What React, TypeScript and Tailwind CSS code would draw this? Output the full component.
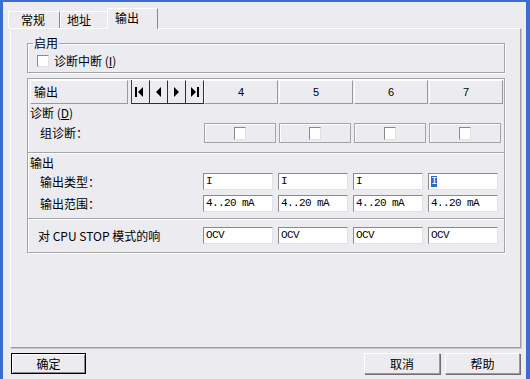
import React from 'react';

const raised = 'border border-t-white border-l-white border-r-[#9a9a9a] border-b-[#9a9a9a]';
const sunken = 'border border-t-[#8a8a8a] border-l-[#8a8a8a] border-r-[#e2e2e2] border-b-[#e2e2e2] bg-white';

const NavGlyph = ({ kind }: { kind: number }) => (
  <svg width="17" height="22" viewBox="0 0 17 22">
    {kind === 0 && (
      <>
        <rect x="3" y="6" width="2" height="10" fill="#000" />
        <polygon points="11,6 11,16 6,11" fill="#000" />
      </>
    )}
    {kind === 1 && <polygon points="11,6 11,16 6,11" fill="#000" />}
    {kind === 2 && <polygon points="6,6 6,16 11,11" fill="#000" />}
    {kind === 3 && (
      <>
        <polygon points="5,6 5,16 10,11" fill="#000" />
        <rect x="11" y="6" width="2" height="10" fill="#000" />
      </>
    )}
  </svg>
);

const Field = ({ value, selected }: { value: string; selected?: boolean }) => (
  <div className={`w-[70px] h-[17px] ${sunken} flex items-center pl-[2px] font-['Liberation_Mono',monospace] text-[11px] tracking-[-0.6px] leading-none`}>
    {selected ? <span className="bg-[#316ac5] text-white">{value}</span> : value}
  </div>
);

const FieldRow = ({ label, value, last, className }: { label: string; value: string; last?: boolean; className: string }) => (
  <div className={`flex items-center h-[17px] ${className}`}>
    <div className="w-[175px] pl-[12px] leading-[17px]">{label}</div>
    {[0, 1, 2, 3].map((i) => (
      <div key={i} className="w-[75px]">
        <Field value={value} selected={last && i === 3} />
      </div>
    ))}
  </div>
);

export default function App() {
  return (
    <div className="w-[530px] h-[379px] bg-[#ecebef] border-t-2 border-l-[3px] border-r-[4px] border-[#3a6dcf] flex flex-col text-[12px] text-black font-['Noto_Sans_CJK_SC','Liberation_Sans',sans-serif]">
      {/* tabs */}
      <div className="flex items-end h-[26px] pl-[5px]">
        <div className="w-[52px] h-[17px] pl-[12px] leading-[15px] border-t border-l border-r border-t-white border-l-white border-r-[#8a8a8a]">常规</div>
        <div className="w-[47px] h-[17px] pl-[6px] leading-[15px] border-t border-l border-t-white border-l-white">地址</div>
        <div className="w-[51px] h-[21px] -mb-px relative z-10 bg-[#ecebef] pl-[7px] leading-[18px] border-t border-l border-r border-t-white border-l-white border-r-[#8a8a8a]">输出</div>
      </div>

      {/* tab panel */}
      <div className="ml-[7px] w-[511px] h-[320px] border border-t-white border-l-white border-r-[#9d9d9d] border-b-[#9d9d9d] shadow-[1px_1px_0_#c9c9c9] pt-[14px] pl-[16px]">
        {/* 启用 group */}
        <div className="relative w-[478px] border border-[#a5a5a5] shadow-[inset_1px_1px_0_#fff,1px_1px_0_#fff] pt-[10px] pb-[4px] pl-[9px]">
          <span className="absolute -top-[8px] left-[5px] px-[1px] bg-[#ecebef] leading-[14px]">启用</span>
          <div className="flex items-center h-[14px] gap-[5px]">
            <div className={`w-[12px] h-[12px] ${sunken}`} />
            <span className="leading-[14px]">
              诊断中断 (<span className="underline">I</span>)
            </span>
          </div>
        </div>

        {/* table */}
        <div className="mt-[5px] w-[478px] border border-[#a5a5a5] shadow-[inset_1px_1px_0_#fff,1px_1px_0_#fff] pb-[8px]">
          <div className="flex mt-[1px] pl-[2px] h-[24px]">
            <div className={`w-[98px] h-[24px] ${raised} pl-[3px] leading-[21px]`}>输出</div>
            <div className="ml-[3px] flex border-l border-[#404040]">
              {[0, 1, 2, 3].map((k) => (
                <div key={k} className="w-[18px] h-[24px] border-t border-t-white border-r border-b border-r-[#303030] border-b-[#303030] flex items-center justify-center">
                  <NavGlyph kind={k} />
                </div>
              ))}
            </div>
            {['4', '5', '6', '7'].map((n) => (
              <div key={n} className={`w-[74px] mr-[1px] h-[24px] ${raised} flex items-center justify-center font-['Liberation_Sans',sans-serif] text-[11px]`}>
                {n}
              </div>
            ))}
          </div>

          <div className="h-[17px] leading-[17px] pl-[2px]">
            诊断 (<span className="underline">D</span>)
          </div>
          <div className="flex items-center h-[20px] mt-[2px]">
            <div className="w-[176px] pl-[12px] leading-[20px]">组诊断：</div>
            {[0, 1, 2, 3].map((i) => (
              <div key={i} className="w-[75px]">
                <div className="w-[72px] h-[20px] border border-[#a5a5a5] shadow-[inset_1px_1px_0_#fff] flex items-center justify-center">
                  <div className={`w-[12px] h-[13px] ${sunken}`} />
                </div>
              </div>
            ))}
          </div>

          <div className="mt-[9px] border-t border-t-[#a5a5a5] border-b border-b-white" />
          <div className="h-[18px] leading-[18px] pl-[2px]">输出</div>
          <FieldRow className="mt-[1px]" label="输出类型：" value="I" last />
          <FieldRow className="mt-[5px]" label="输出范围：" value="4..20 mA" />

          <div className="mt-[6px] border-t border-t-[#a5a5a5] border-b border-b-white" />
          <div className="flex items-center h-[17px] mt-[7px]">
            <div className="w-[175px] pl-[10px] leading-[17px]">对 CPU STOP 模式的响</div>
            {[0, 1, 2, 3].map((i) => (
              <div key={i} className="w-[75px]">
                <Field value="OCV" />
              </div>
            ))}
          </div>
        </div>
      </div>

      {/* buttons */}
      <div className="flex mt-[5px] pl-[8px] pr-[6px]">
        <button className="w-[75px] h-[21px] border border-black shadow-[inset_1px_1px_0_#fff,inset_-1px_-1px_0_#8a8a8a] leading-[19px]">确定</button>
        <button className={`ml-auto w-[76px] h-[21px] ${raised} shadow-[1px_1px_0_#6f6f6f] leading-[19px]`}>取消</button>
        <button className={`ml-[5px] w-[75px] h-[21px] ${raised} shadow-[1px_1px_0_#6f6f6f] leading-[19px]`}>帮助</button>
      </div>
    </div>
  );
}
